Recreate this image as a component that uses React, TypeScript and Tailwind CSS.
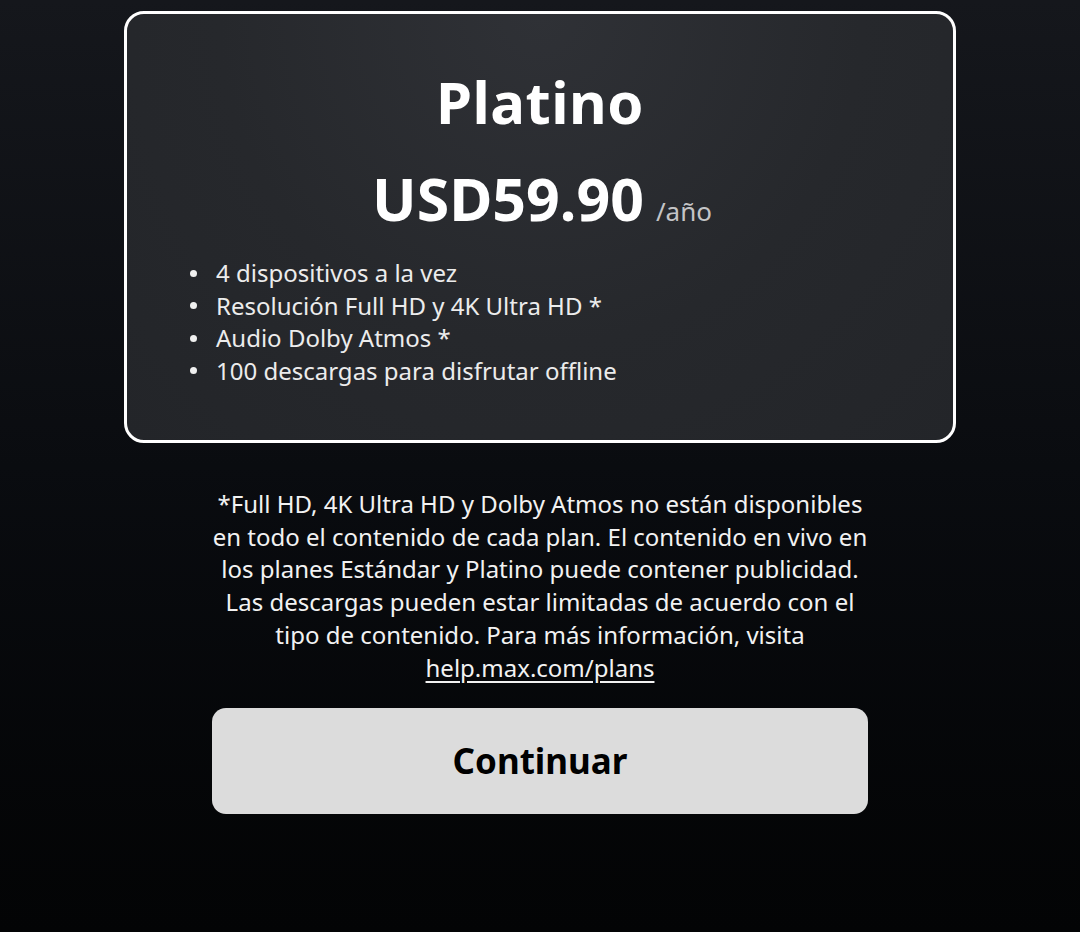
import { useState } from 'react';

// Plan summary card + disclaimer + continue button
const features = [
  '4 dispositivos a la vez',
  'Resolución Full HD y 4K Ultra HD *',
  'Audio Dolby Atmos *',
  '100 descargas para disfrutar offline',
];

const App = () => {
  const [selected] = useState(true);

  return (
    <div
      className="min-h-[932px] w-full bg-gradient-to-b from-[#15171c] via-[#0a0c10] to-[#030405] flex flex-col items-center pt-[11px]"
      style={{ fontFamily: '"Noto Sans", "Open Sans", sans-serif' }}
    >
      {/* Plan card */}
      <div
        className={`w-[832px] h-[432px] rounded-[20px] border-[3px] ${
          selected ? 'border-white' : 'border-transparent'
        } bg-[radial-gradient(ellipse_at_50%_0%,#2f3136_0%,#26282c_55%,#232529_100%)] flex flex-col items-center pt-[53px]`}
      >
        <h2 className="text-white font-bold text-[58px] leading-[70px] tracking-[0.5px]">Platino</h2>
        <div className="flex items-baseline mt-[26px] ml-[4px]">
          <span className="text-white font-bold text-[59px] leading-[70px]">USD59.90</span>
          <span className="text-[#c4c4c6] text-[26px] ml-[12px]">/año</span>
        </div>
        <ul className="self-start ml-[63px] mt-[24px] flex flex-col text-[#ececec] text-[24px] leading-[32.5px]">
          {features.map((f) => (
            <li key={f} className="flex items-center">
              <span className="w-[7px] h-[7px] rounded-full bg-[#f0f0f0] mr-[19px]" />
              {f}
            </li>
          ))}
        </ul>
      </div>

      {/* Disclaimer */}
      <p className="w-[660px] mt-[45px] text-center text-[#f2f2f2] text-[24px] leading-[32.7px]">
        *Full HD, 4K Ultra HD y Dolby Atmos no están disponibles en todo el contenido de cada plan. El contenido en vivo en los planes Estándar y Platino puede contener publicidad. Las descargas pueden estar limitadas de acuerdo con el tipo de contenido. Para más información, visita{' '}
        <a href="#" className="underline underline-offset-[4px]">help.max.com/plans</a>
      </p>

      {/* Continue button */}
      <button className="w-[656px] h-[106px] mt-[24px] rounded-[14px] bg-[#dcdcdc] text-black font-bold text-[35px]">
        Continuar
      </button>
    </div>
  );
};

export default App;
